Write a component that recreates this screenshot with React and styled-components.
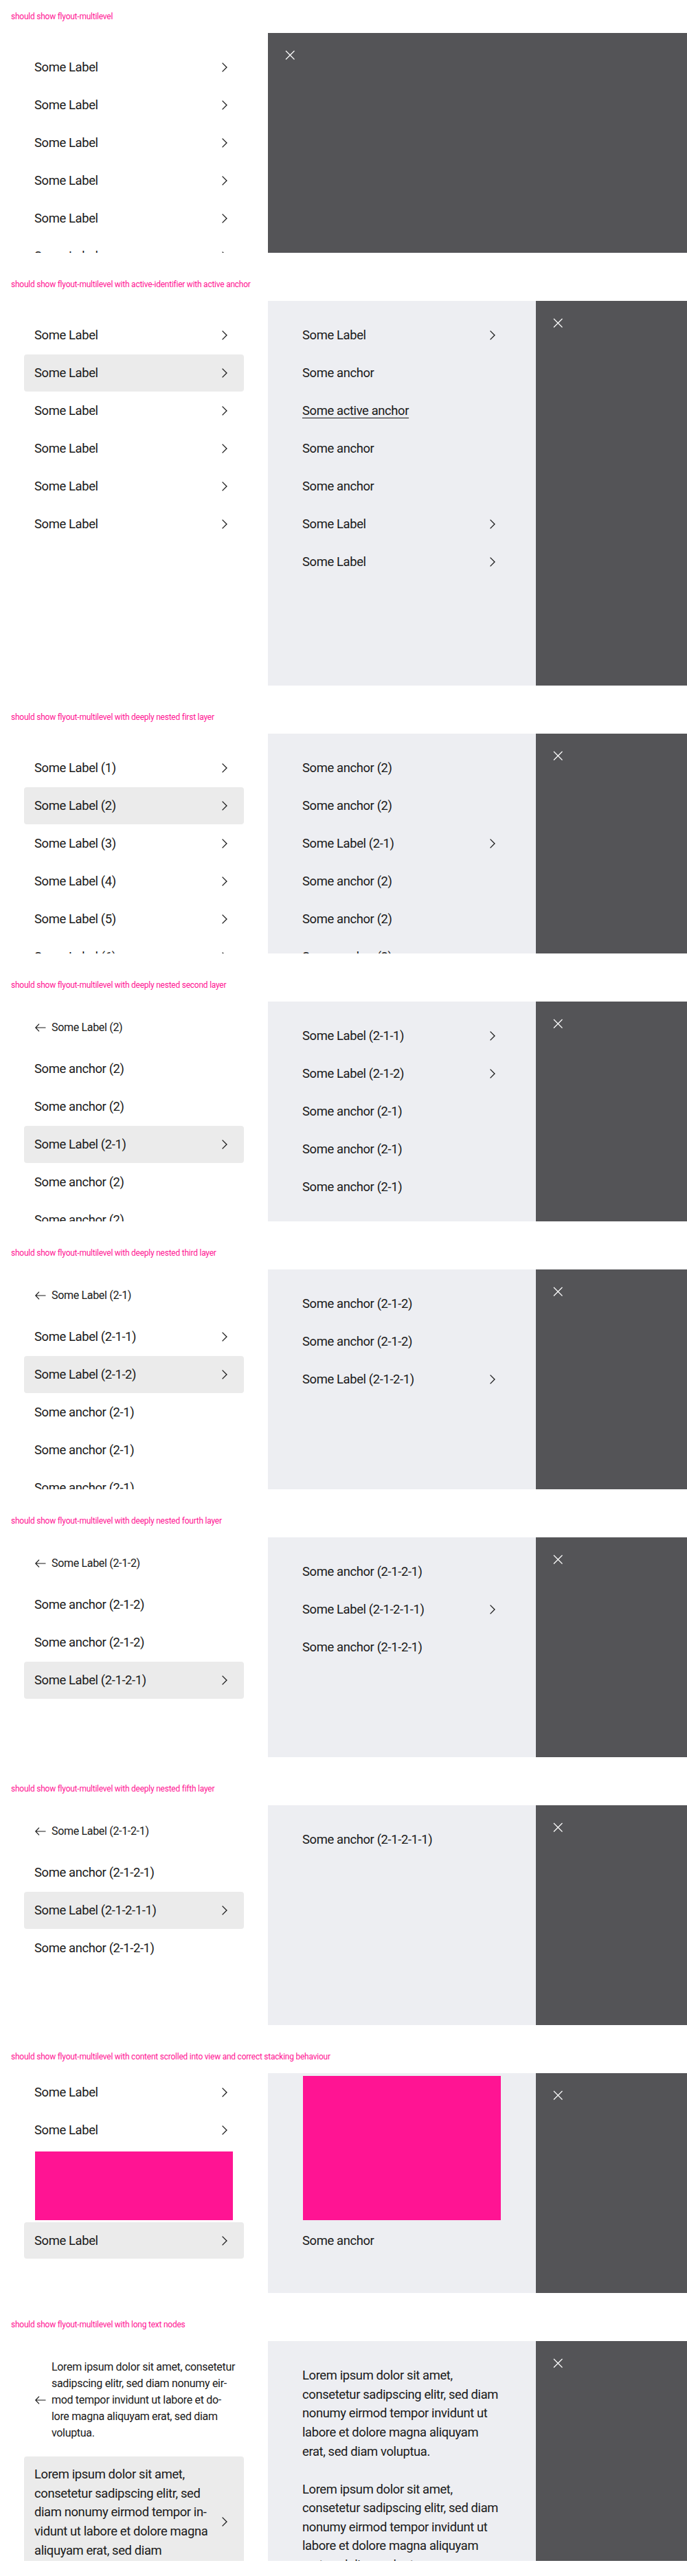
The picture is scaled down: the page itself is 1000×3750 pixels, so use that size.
import React from "react";
import styled, { createGlobalStyle, css } from "styled-components";

const LONG_BACK =
  "Lorem ipsum dolor sit amet, consetetur sadipscing elitr, sed diam nonumy eir\u00ADmod tempor invidunt ut labore et do\u00ADlore magna aliquyam erat, sed diam voluptua.";
const LONG_ROW =
  "Lorem ipsum dolor sit amet, consetetur sadipscing elitr, sed diam nonumy eirmod tempor in\u00ADvidunt ut labore et dolore magna aliquyam erat, sed diam voluptua.";
const LONG_TEXT =
  "Lorem ipsum dolor sit amet, consetetur sadipscing elitr, sed diam nonumy eirmod tempor invidunt ut labore et dolore magna aliquyam erat, sed diam voluptua.";

const label = (text, selected) => ({ text, chevron: true, selected });
const anchor = (text, active) => ({ text, active });
const box = (height) => ({ box: height });

const stories = [
  {
    title: "should show flyout-multilevel",
    height: 320,
    levels: [
      {
        items: Array.from({ length: 8 }, () => label("Some Label")),
      },
    ],
  },
  {
    title:
      "should show flyout-multilevel with active-identifier with active anchor",
    height: 560,
    levels: [
      {
        items: [
          label("Some Label"),
          label("Some Label", true),
          label("Some Label"),
          label("Some Label"),
          label("Some Label"),
          label("Some Label"),
        ],
      },
      {
        grey: true,
        items: [
          label("Some Label"),
          anchor("Some anchor"),
          anchor("Some active anchor", true),
          anchor("Some anchor"),
          anchor("Some anchor"),
          label("Some Label"),
          label("Some Label"),
        ],
      },
    ],
  },
  {
    title: "should show flyout-multilevel with deeply nested first layer",
    height: 320,
    levels: [
      {
        items: [1, 2, 3, 4, 5, 6, 7].map((n) =>
          label(`Some Label (${n})`, n === 2)
        ),
      },
      {
        grey: true,
        items: [
          anchor("Some anchor (2)"),
          anchor("Some anchor (2)"),
          label("Some Label (2-1)"),
          anchor("Some anchor (2)"),
          anchor("Some anchor (2)"),
          anchor("Some anchor (2)"),
        ],
      },
    ],
  },
  {
    title: "should show flyout-multilevel with deeply nested second layer",
    height: 320,
    levels: [
      {
        back: "Some Label (2)",
        items: [
          anchor("Some anchor (2)"),
          anchor("Some anchor (2)"),
          label("Some Label (2-1)", true),
          anchor("Some anchor (2)"),
          anchor("Some anchor (2)"),
        ],
      },
      {
        grey: true,
        items: [
          label("Some Label (2-1-1)"),
          label("Some Label (2-1-2)"),
          anchor("Some anchor (2-1)"),
          anchor("Some anchor (2-1)"),
          anchor("Some anchor (2-1)"),
        ],
      },
    ],
  },
  {
    title: "should show flyout-multilevel with deeply nested third layer",
    height: 320,
    levels: [
      {
        back: "Some Label (2-1)",
        items: [
          label("Some Label (2-1-1)"),
          label("Some Label (2-1-2)", true),
          anchor("Some anchor (2-1)"),
          anchor("Some anchor (2-1)"),
          anchor("Some anchor (2-1)"),
        ],
      },
      {
        grey: true,
        items: [
          anchor("Some anchor (2-1-2)"),
          anchor("Some anchor (2-1-2)"),
          label("Some Label (2-1-2-1)"),
        ],
      },
    ],
  },
  {
    title: "should show flyout-multilevel with deeply nested fourth layer",
    height: 320,
    levels: [
      {
        back: "Some Label (2-1-2)",
        items: [
          anchor("Some anchor (2-1-2)"),
          anchor("Some anchor (2-1-2)"),
          label("Some Label (2-1-2-1)", true),
        ],
      },
      {
        grey: true,
        items: [
          anchor("Some anchor (2-1-2-1)"),
          label("Some Label (2-1-2-1-1)"),
          anchor("Some anchor (2-1-2-1)"),
        ],
      },
    ],
  },
  {
    title: "should show flyout-multilevel with deeply nested fifth layer",
    height: 320,
    levels: [
      {
        back: "Some Label (2-1-2-1)",
        items: [
          anchor("Some anchor (2-1-2-1)"),
          label("Some Label (2-1-2-1-1)", true),
          anchor("Some anchor (2-1-2-1)"),
        ],
      },
      {
        grey: true,
        items: [anchor("Some anchor (2-1-2-1-1)")],
      },
    ],
  },
  {
    title:
      "should show flyout-multilevel with content scrolled into view and correct stacking behaviour",
    height: 320,
    levels: [
      {
        scrolled: 22,
        items: [
          label("Some Label"),
          label("Some Label"),
          box(100),
          label("Some Label", true),
        ],
      },
      {
        grey: true,
        scrolled: 22,
        items: [box(210), anchor("Some anchor")],
      },
    ],
  },
  {
    title: "should show flyout-multilevel with long text nodes",
    height: 320,
    levels: [
      {
        back: LONG_BACK,
        items: [label(LONG_ROW, true)],
      },
      {
        grey: true,
        items: [anchor(LONG_TEXT), anchor(LONG_TEXT)],
      },
    ],
  },
];

const GlobalStyle = createGlobalStyle`
  html, body {
    margin: 0;
    padding: 0;
    background: #ffffff;
  }
  body {
    font-family: Roboto, "Liberation Sans", sans-serif;
    color: #191919;
    -webkit-font-smoothing: antialiased;
  }
`;

const Story = styled.section`
  padding: 16px 0 22px;
`;

const StoryTitle = styled.h2`
  margin: 0 0 16px 16px;
  font-size: 12px;
  line-height: 16px;
  font-weight: 400;
  letter-spacing: -0.02em;
  color: #ff1493;
`;

const Flyout = styled.div`
  display: flex;
  height: ${(p) => p.$height}px;
  overflow: hidden;
`;

const Level = styled.nav`
  flex: 0 0 390px;
  box-sizing: border-box;
  padding: 23.5px 35px 0;
  background: ${(p) => (p.$grey ? "#edeef2" : "#ffffff")};
  overflow: hidden;
`;

const Scroller = styled.div`
  margin-top: ${(p) => -(p.$offset || 0)}px;
`;

const BackLink = styled.a`
  display: flex;
  align-items: center;
  gap: 8px;
  padding: 2px 0 2px 16px;
  margin-bottom: 20px;
  font-size: 16px;
  line-height: 24px;
  letter-spacing: -0.02em;
  color: inherit;
  text-decoration: none;
  hyphens: manual;
`;

const BackText = styled.span`
  flex: 0 1 267.6px;
`;

const BackIcon = styled.svg`
  flex: 0 0 16px;
  width: 16px;
  height: 16px;
  fill: none;
  stroke: currentColor;
  stroke-width: 1.2;
`;

const List = styled.ul`
  display: flex;
  flex-direction: column;
  gap: 1.8px;
  margin: 0;
  padding: 0;
  list-style: none;
`;

const Item = styled.li`
  display: flex;
  align-items: center;
  justify-content: space-between;
  gap: 8px;
  min-height: 53.2px;
  box-sizing: border-box;
  padding: 12.8px 16px 12.8px 15px;
  border-radius: 4px;
  background: ${(p) => (p.$selected ? "#ebebeb" : "transparent")};
`;

const ItemText = styled.span`
  font-size: 18.4px;
  line-height: 27.6px;
  letter-spacing: -0.02em;
  hyphens: manual;
  ${(p) =>
    p.$active &&
    css`
      text-decoration: underline;
      text-decoration-thickness: 1px;
      text-underline-offset: 4px;
    `}
`;

const ChevronIcon = styled.svg`
  flex: 0 0 24px;
  width: 24px;
  height: 24px;
  fill: none;
  stroke: currentColor;
  stroke-width: 1.3;
`;

const Placeholder = styled.li`
  height: ${(p) => p.$height}px;
  margin: 2.6px 16px 1.2px;
  background: #ff1493;
`;

const Backdrop = styled.div`
  flex: 1;
  box-sizing: border-box;
  padding: 20px;
  background: #545457;
`;

const CloseButton = styled.button`
  display: block;
  width: 24px;
  height: 24px;
  padding: 0;
  border: 0;
  background: none;
  color: #ffffff;
  svg {
    display: block;
    width: 24px;
    height: 24px;
    fill: none;
    stroke: currentColor;
    stroke-width: 1.2;
  }
`;

function Chevron() {
  return (
    <ChevronIcon viewBox="0 0 24 24" aria-hidden="true">
      <path d="M8.6 5.6 15 12l-6.4 6.4" />
    </ChevronIcon>
  );
}

function LevelColumn({ level }) {
  return (
    <Level $grey={level.grey}>
      <Scroller $offset={level.scrolled}>
        {level.back && (
          <BackLink href="#">
            <BackIcon viewBox="0 0 16 16" aria-hidden="true">
              <path d="M0.8 8H15.5M6 2.7 0.8 8 6 13.3" />
            </BackIcon>
            <BackText>{level.back}</BackText>
          </BackLink>
        )}
        <List>
          {level.items.map((item, i) =>
            item.box ? (
              <Placeholder key={i} $height={item.box} />
            ) : (
              <Item key={i} $selected={item.selected}>
                <ItemText $active={item.active}>{item.text}</ItemText>
                {item.chevron && <Chevron />}
              </Item>
            )
          )}
        </List>
      </Scroller>
    </Level>
  );
}

export default function App() {
  return (
    <>
      <GlobalStyle />
      {stories.map((story, i) => (
        <Story key={i}>
          <StoryTitle>{story.title}</StoryTitle>
          <Flyout $height={story.height}>
            {story.levels.map((level, j) => (
              <LevelColumn key={j} level={level} />
            ))}
            <Backdrop>
              <CloseButton aria-label="Close">
                <svg viewBox="0 0 24 24" aria-hidden="true">
                  <path d="M6 6l12.5 12.5M18.5 6 6 18.5" />
                </svg>
              </CloseButton>
            </Backdrop>
          </Flyout>
        </Story>
      ))}
    </>
  );
}
